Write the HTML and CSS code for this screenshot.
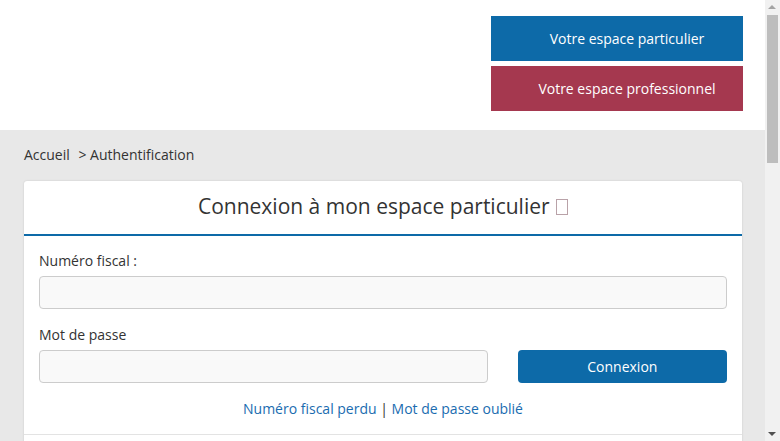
FILE: index.html
```html
<!DOCTYPE html>
<html lang="fr">
<head>
  <meta charset="UTF-8" />
  <meta name="viewport" content="width=device-width, initial-scale=1.0"/>
  <title>Authentification</title>
  <link rel="stylesheet" href="styles.css">
</head>
<body>
  <div class="page">
    <header class="top">
      <div class="spaces">
        <a class="space space-part" href="#">Votre espace particulier</a>
        <a class="space space-pro" href="#">Votre espace professionnel</a>
      </div>
    </header>

    <main class="content">
      <div class="breadcrumb">
        <a href="#">Accueil</a> <span class="sep">&gt;</span> Authentification
      </div>

      <div class="card">
        <div class="card-head">
          <h1>Connexion à mon espace particulier <span class="tofu"></span></h1>
        </div>
        <form class="card-body" onsubmit="return false">
          <label for="spi">Numéro fiscal :</label>
          <input id="spi" type="text" class="field">

          <label for="pwd">Mot de passe</label>
          <div class="pwd-row">
            <input id="pwd" type="password" class="field">
            <button type="submit" class="btn">Connexion</button>
          </div>

          <div class="links">
            <a href="#">Numéro fiscal perdu</a> | <a href="#">Mot de passe oublié</a>
          </div>
        </form>
        <div class="card-foot"></div>
      </div>
    </main>
  </div>

  <!-- fake window scrollbar (headless shots drop the real one) -->
  <div class="scrollbar">
    <span class="arrow up"></span>
    <span class="thumb"></span>
    <span class="arrow down"></span>
  </div>
</body>
</html>
```

FILE: styles.css
```css
body {
  margin: 0;
  font-family: 'Open Sans', sans-serif;
  color: #333;
  background: #e8e8e8;
  overflow: hidden;
}
a {
  text-decoration: none;
}
.page {
  margin-right: 15px;
}
.top {
  background: #fff;
  height: 130px;
  box-sizing: border-box;
  padding: 16px 22px 0 0;
  display: flex;
  justify-content: flex-end;
}
.spaces {
  display: flex;
  flex-direction: column;
  gap: 5px;
  width: 252px;
}
.space {
  display: flex;
  align-items: center;
  justify-content: center;
  height: 45px;
  padding-left: 20px;
  color: #fff;
  font-size: 14px;
}
.space-part {
  background: #0d6aa8;
}
.space-pro {
  background: #a5384f;
}
.content {
  padding: 0 23px 40px 24px;
}
.breadcrumb {
  font-size: 14px;
  padding: 15px 0 0 0;
  height: 36px;
}
.breadcrumb a {
  color: #333;
}
.breadcrumb .sep {
  margin-left: 5px;
}
.card {
  background: #fff;
  border-radius: 3px;
  box-shadow: 0 0 2px rgba(0, 0, 0, 0.15);
}
.card-head {
  height: 55px;
  box-sizing: border-box;
  padding-bottom: 4px;
  border-bottom: 2px solid #0d6aa8;
  display: flex;
  align-items: center;
  justify-content: center;
}
.card-head h1 {
  margin: 0;
  font-size: 21px;
  font-weight: 400;
  color: #333;
}
.tofu {
  display: inline-block;
  width: 10px;
  height: 14px;
  border: 1px solid #b9a2a8;
  vertical-align: -1px;
  margin-left: 1px;
}
.card-body {
  padding: 15px 15px 16px;
  display: flex;
  flex-direction: column;
}
.card-body label {
  font-size: 14px;
  line-height: 19px;
  margin-bottom: 6px;
}
.field {
  height: 33px;
  box-sizing: border-box;
  border: 1px solid #ccc;
  border-radius: 4px;
  background: #f9f9f9;
  margin: 0 0 16px;
  font-family: inherit;
}
.pwd-row {
  display: grid;
  grid-template-columns: calc((100% + 30px) * 2 / 3 - 30px) 1fr;
  gap: 30px;
}
.pwd-row .field {
  margin: 0;
  width: 100%;
}
.btn {
  height: 33px;
  background: #0d6aa8;
  color: #fff;
  border: none;
  border-radius: 4px;
  font-family: inherit;
  font-size: 14px;
  cursor: pointer;
}
.links {
  text-align: center;
  font-size: 14px;
  line-height: 19px;
  margin-top: 16px;
}
.links a {
  color: #1a6cb0;
}
.card-foot {
  border-top: 1px solid #e3e3e3;
  height: 60px;
}
.scrollbar {
  position: fixed;
  top: 0;
  right: 0;
  width: 15px;
  height: 100%;
  background: #f1f1f1;
}
.thumb {
  position: absolute;
  left: 2px;
  top: 15px;
  width: 11px;
  height: 148px;
  background: #bdbdbd;
}
.arrow {
  position: absolute;
  left: 3px;
  width: 0;
  height: 0;
  border-left: 4px solid transparent;
  border-right: 4px solid transparent;
}
.arrow.up {
  top: 5px;
  border-bottom: 4px solid #a3a3a3;
}
.arrow.down {
  bottom: 5px;
  border-top: 4px solid #505050;
}
```
